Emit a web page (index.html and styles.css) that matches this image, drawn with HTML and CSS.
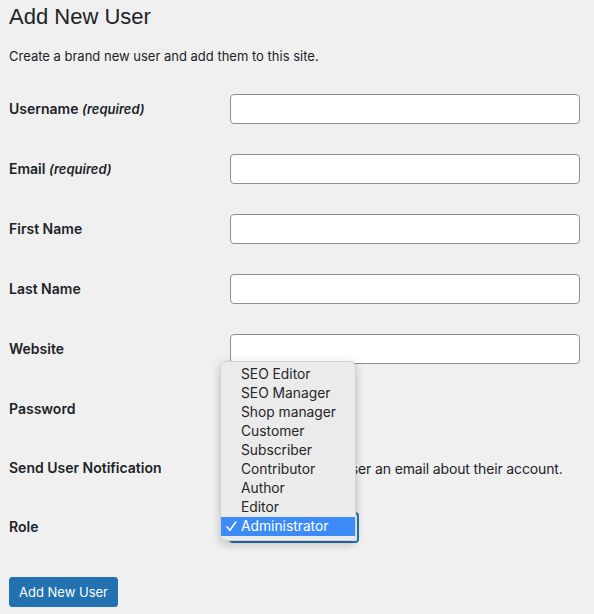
FILE: index.html
```html
<!DOCTYPE html>
<html lang="en">
<head>
<meta charset="utf-8">
<title>Add New User</title>
<link rel="stylesheet" href="styles.css">
</head>
<body>
<div class="wrap">
  <h1 class="title">Add New User</h1>
  <p class="intro">Create a brand new user and add them to this site.</p>
  <form class="form">
    <div class="row">
      <label class="label">Username <em>(required)</em></label>
      <input class="field" type="text">
    </div>
    <div class="row">
      <label class="label">Email <em>(required)</em></label>
      <input class="field" type="text">
    </div>
    <div class="row">
      <label class="label">First Name</label>
      <input class="field" type="text">
    </div>
    <div class="row">
      <label class="label">Last Name</label>
      <input class="field" type="text">
    </div>
    <div class="row">
      <label class="label">Website</label>
      <input class="field" type="text">
    </div>
    <div class="row">
      <label class="label">Password</label>
      <span class="empty"></span>
    </div>
    <div class="row row-notify">
      <label class="label">Send User Notification</label>
      <span class="notify"><span class="check"></span>Send the new user an email about their account.</span>
    </div>
    <div class="row">
      <label class="label">Role</label>
      <div class="select-wrap">
        <div class="select">Administrator</div>
        <ul class="menu">
          <li>SEO Editor</li>
          <li>SEO Manager</li>
          <li>Shop manager</li>
          <li>Customer</li>
          <li>Subscriber</li>
          <li>Contributor</li>
          <li>Author</li>
          <li>Editor</li>
          <li class="selected"><svg class="tick" width="11" height="11" viewBox="0 0 11 11"><path d="M1 5.8 L3.9 9.2 L9.8 1" fill="none" stroke="#fff" stroke-width="1.5" stroke-linecap="round" stroke-linejoin="round"/></svg>Administrator</li>
        </ul>
      </div>
    </div>
    <div class="actions">
      <button class="button" type="button">Add New User</button>
    </div>
  </form>
</div>
</body>
</html>
```
FILE: styles.css
```css
* { box-sizing: border-box; }
html, body {
  margin: 0;
  padding: 0;
  background: #f0f0f1;
  color: #1d2327;
  font-family: Inter, "Liberation Sans", sans-serif;
}
.wrap {
  padding: 0 0 0 9px;
}
.title {
  margin: 0;
  padding-top: 2px;
  font-family: "Liberation Sans", Arial, sans-serif;
  font-size: 22px;
  font-weight: 400;
  line-height: 29px;
}
.intro {
  margin: 15px 0 0;
  font-size: 13px;
  line-height: 20px;
}
.form {
  margin-top: 13px;
}
.row {
  display: flex;
  align-items: center;
  height: 60px;
}
.row-notify {
  height: 58px;
}
.label {
  width: 221px;
  flex: none;
  font-size: 14px;
  font-weight: 600;
  line-height: 20px;
}
.label em {
  font-size: 13px;
  font-style: italic;
}
.field {
  width: 350px;
  height: 30px;
  margin: 0;
  border: 1px solid #8c8f94;
  border-radius: 4px;
  background: #fff;
  padding: 0 8px;
}
.notify {
  display: flex;
  align-items: center;
  font-size: 14px;
  letter-spacing: -0.14px;
}
.check {
  width: 16px;
  height: 16px;
  border: 1px solid #8c8f94;
  border-radius: 4px;
  background: #fff;
  margin-right: 4px;
}
.select-wrap {
  position: relative;
}
.select {
  width: 128px;
  height: 29px;
  border: 1px solid #2271b1;
  box-shadow: 0 0 0 1px #2271b1;
  border-radius: 3px;
  background: #fff;
  font-size: 14px;
  line-height: 27px;
  padding-left: 8px;
}
.menu {
  position: absolute;
  left: -10px;
  top: -152px;
  width: 136px;
  margin: 0;
  padding: 3px 0 4px;
  list-style: none;
  background: #ebebeb;
  border: 1px solid #d2d2d2;
  border-radius: 6px;
  box-shadow: 0 3px 10px rgba(0, 0, 0, 0.22);
  font-size: 13.8px;
  color: #262626;
}
.menu li {
  height: 19px;
  line-height: 19px;
  padding-left: 20px;
  position: relative;
}
.menu li.selected {
  background: #3d8bf7;
  color: #fff;
}
.tick {
  position: absolute;
  left: 5px;
  top: 4px;
}
.actions {
  padding-top: 20px;
}
.button {
  height: 30px;
  padding: 0 9px;
  border: 1px solid #2271b1;
  border-radius: 3px;
  background: #2271b1;
  color: #fff;
  font-family: Inter, "Liberation Sans", sans-serif;
  font-size: 13px;
  line-height: 28px;
}
```
